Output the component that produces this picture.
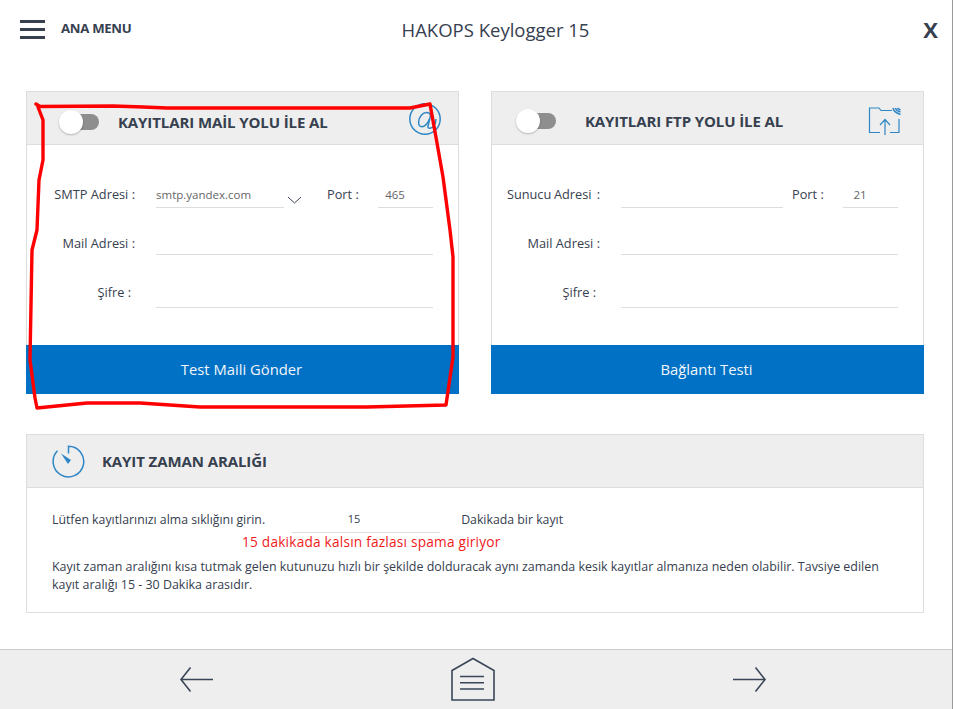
<div class="page">
  <header class="top">
    <div class="menu">
      <span class="burger"><i></i><i></i><i></i></span>
      <span class="menu-text">ANA MENU</span>
    </div>
    <div class="title">HAKOPS Keylogger 15</div>
    <div class="close">X</div>
  </header>

  <main class="content">
    <div class="cards">
      <section class="card">
        <div class="head">
          <span class="toggle"><span class="knob"></span></span>
          <h2 class="h-mail">KAYITLARI MAİL YOLU İLE AL</h2>
          <svg class="at" width="34" height="34" viewBox="0 0 34 34" fill="none" stroke="#2f86c5" stroke-width="1.5">
            <circle cx="17" cy="17" r="15.2" />
            <path d="M23.5 9.5 L20 24 Q19.6 26.5 22 26.3 Q27.5 25.5 28 17" />
            <path d="M22.6 13 C21 9.5 16.5 9.5 13.5 13 C10 17 9.5 23.5 13 24.6 C16.5 25.5 20 21 21.5 17" />
          </svg>
        </div>
        <div class="body">
          <div class="row r1">
            <label class="lbl">SMTP Adresi :</label>
            <input class="f f-smtp" value="smtp.yandex.com" />
            <svg class="chev" width="15" height="8" viewBox="0 0 15 8" fill="none" stroke="#3a4658"><path d="M1 1 L7.5 7 L14 1" /></svg>
            <label class="lbl port p-mail">Port :</label>
            <input class="f f-port" value="465" />
          </div>
          <div class="row r2">
            <label class="lbl">Mail Adresi :</label>
            <input class="f f-full" />
          </div>
          <div class="row r3">
            <label class="lbl shift">Şifre :</label>
            <input class="f f-full" />
          </div>
        </div>
        <button class="action">Test Maili Gönder</button>
      </section>

      <section class="card">
        <div class="head">
          <span class="toggle t2"><span class="knob"></span></span>
          <h2 class="h-ftp">KAYITLARI FTP YOLU İLE AL</h2>
          <svg class="ftp" width="34" height="30" viewBox="0 0 34 30" fill="none" stroke="#2f86c5" stroke-width="1.2">
            <path d="M24 3.5 H13 L11 1 H1.5 V25.5 H12 M22 25.5 H31 V12" />
            <path d="M17 28 V12.5 M12 18 L17 12.5 L22 18" />
            <path class="waves" d="M25 1 Q26 5.5 32.5 7.5 M27.3 1 Q28.5 3.8 32.5 5 M29.6 1 Q30.5 2.4 32.5 2.8" />
          </svg>
        </div>
        <div class="body">
          <div class="row r1">
            <label class="lbl tight">Sunucu Adresi&nbsp; :</label>
            <input class="f f-server" />
            <label class="lbl port p-ftp">Port :</label>
            <input class="f f-port" value="21" />
          </div>
          <div class="row r2">
            <label class="lbl">Mail Adresi :</label>
            <input class="f f-full" />
          </div>
          <div class="row r3">
            <label class="lbl shift">Şifre :</label>
            <input class="f f-full" />
          </div>
        </div>
        <button class="action">Bağlantı Testi</button>
      </section>
    </div>

    <section class="card wide">
      <div class="head">
        <svg class="timer" width="33" height="33" viewBox="0 0 33 33" fill="none" stroke="#2f86c5" stroke-width="1.5">
          <path d="M16.5 8.5 V1.2 A15.3 15.3 0 1 1 5.5 5.8" />
          <path d="M9 8.5 L19 15 L16 19 Z" fill="#2f86c5" stroke="none" />
        </svg>
        <h2>KAYIT ZAMAN ARALIĞI</h2>
      </div>
      <div class="wide-body">
        <div class="freq">
          <span class="freq-text">Lütfen kayıtlarınızı alma sıklığını girin.</span>
          <input class="f f-freq" value="15" />
          <span class="freq-text unit">Dakikada bir kayıt</span>
        </div>
        <div class="note">15 dakikada kalsın fazlası spama giriyor</div>
        <p>Kayıt zaman aralığını kısa tutmak gelen kutunuzu hızlı bir şekilde dolduracak aynı zamanda kesik kayıtlar almanıza neden olabilir. Tavsiye edilen kayıt aralığı 15 - 30 Dakika arasıdır.</p>
      </div>
    </section>
  </main>

  <footer class="bottom">
    <svg width="36" height="26" viewBox="0 0 36 26" fill="none" stroke="#3a4658" stroke-width="1.6"><path d="M34 12.5 H2 M11.5 0.5 L2 12.5 L11.5 24.5" /></svg>
    <svg width="46" height="46" viewBox="0 0 46 46" fill="none" stroke="#3a4658" stroke-width="1.6"><path d="M23 1.5 L44 13.5 V43 H2 V13.5 Z" /><path d="M10 19.5 H34 M10 25.8 H34 M10 32 H34" /></svg>
    <svg width="36" height="26" viewBox="0 0 36 26" fill="none" stroke="#3a4658" stroke-width="1.6"><path d="M2 12.5 H34 M24.5 0.5 L34 12.5 L24.5 24.5" /></svg>
  </footer>

  <svg class="scribble" width="953" height="709" viewBox="0 0 953 709" fill="none" stroke="#ff0000" stroke-width="3.4" stroke-linejoin="round" stroke-linecap="round">
    <path d="M36 104 L40 106.5 L113 106 L143 107 L167 108 L410 108 L430 104 L437 143 L443 177 L450 230 L453 257 L453 343 L453 357 L446 405 L367 407 L200 407 L140 403 L87 403 L37 408 L35 398 L30 360 L32 250 L37 230 L39 180 L43 160 L43 120 L38 107" />
  </svg>
</div>

<style>
  :global(body) { margin: 0; background: #fff; }
  .page {
    position: relative;
    width: 953px;
    height: 709px;
    box-sizing: border-box;
    border-right: 1px solid #9a9a9a;
    display: flex;
    flex-direction: column;
    overflow: hidden;
    font-family: "Open Sans", sans-serif;
    color: #36404f;
    font-size: 12px;
  }
  .top {
    height: 58px;
    flex: none;
    display: grid;
    grid-template-columns: 1fr auto 1fr;
    align-items: center;
    padding: 0 14px 0 20px;
  }
  .menu { display: flex; align-items: center; gap: 16px; }
  .burger { display: flex; flex-direction: column; gap: 5px; width: 25px; }
  .burger i { display: block; height: 3px; background: #36404f; }
  .menu-text { font-weight: 700; font-size: 13.2px; letter-spacing: -0.3px; margin-top: -2px; }
  .title { font-size: 18.5px; color: #36404f; margin-left: 33px; }
  .close { justify-self: end; font-size: 22px; font-weight: 700; margin-top: -1px; }

  .content { flex: 1; padding: 33px 28px 0 26px; }
  .cards { display: flex; justify-content: space-between; }
  .card {
    width: 433px;
    box-sizing: border-box;
    border: 1px solid #ddd;
    display: flex;
    flex-direction: column;
    height: 303px;
    background: #fff;
  }
  .head {
    height: 53px;
    flex: none;
    box-sizing: border-box;
    background: #eee;
    border-bottom: 1px solid #ddd;
    display: flex;
    align-items: center;
    position: relative;
  }
  h2 { margin: 0; font-size: 15px; font-weight: 700; color: #36404f; letter-spacing: -0.1px; }
  .h-mail { margin: 8px 0 0 19px; }
  .h-ftp { margin: 5px 0 0 29px; }
  .toggle {
    position: relative;
    width: 33px;
    height: 16px;
    margin: 7px 0 0 39px;
    border-radius: 8px;
    background: #8e8e8e;
    flex: none;
  }
  .toggle.t2 { margin: 5px 0 0 31px; }
  .knob {
    position: absolute;
    left: -7px;
    top: -4px;
    width: 24px;
    height: 24px;
    border-radius: 50%;
    background: #fff;
    box-shadow: 0 1px 2px rgba(0, 0, 0, 0.25);
  }
  .at { position: absolute; right: 16px; top: 10px; }
  .ftp { position: absolute; right: 21px; top: 15px; }
  .waves { stroke-width: 1.5; }
  .timer { margin-left: 25px; margin-right: 17px; }

  .body { flex: 1; padding-top: 39px; }
  .row { display: flex; align-items: flex-end; }
  .r2 { margin-top: 23px; }
  .r3 { margin-top: 27px; }
  .lbl {
    width: 108px;
    margin-right: 21px;
    font-size: 12.75px;
    text-align: right;
    flex: none;
    line-height: 20px;
    padding-bottom: 4px;
    box-sizing: content-box;
  }
  .tight { word-spacing: -0.7px; }
  .r2 .lbl { padding-bottom: 2px; }
  .r3 .shift { width: 104px; padding-right: 4px; padding-bottom: 6px; }
  .f {
    height: 24px;
    box-sizing: border-box;
    border: 0;
    border-bottom: 1px solid #ddd;
    background: none;
    padding: 0 0 2px;
    outline: none;
    font: 11.5px "Open Sans", sans-serif;
    color: #666;
    flex: none;
  }
  .f-smtp { width: 128px; }
  .chev { margin: 0 0 4px 3px; flex: none; }
  .port { text-align: left; margin-right: 0; }
  .p-mail { margin-left: 25px; width: 51px; }
  .p-ftp { margin-left: 9px; width: 51px; }
  .f-port { width: 55px; text-align: center; padding-right: 21px; }
  .f-full { width: 277px; }
  .f-server { width: 162px; }
  .action {
    height: 49px;
    margin: 0 -1px -1px;
    flex: none;
    border: 0;
    background: #0071c5;
    color: #f2f6fa;
    font: 14.8px "Open Sans", sans-serif;
    padding: 0 2px 2px 0;
  }

  .wide { width: 898px; height: 179px; margin-top: 40px; }
  .wide-body { padding: 18px 25px 0; }
  .freq { display: flex; align-items: flex-start; }
  .freq-text { font-size: 12.3px; line-height: 16px; margin-top: 6px; }
  .f-freq { height: 27px; width: 148px; margin-left: 27px; text-align: center; color: #36404f; font-size: 11px; padding-right: 24px; }
  .unit { margin-left: 21px; }
  .note { color: #f01a1a; font-size: 13.7px; margin: -1px 0 0 190px; line-height: 20px; letter-spacing: 0.2px; }
  p { margin: 6px 0 0; font-size: 12.45px; line-height: 18px; color: #36404f; }

  .bottom {
    height: 60px;
    flex: none;
    background: #eee;
    border-top: 1px solid #ccc;
    box-sizing: border-box;
    display: grid;
    grid-template-columns: 36px 46px 36px;
    justify-content: space-between;
    align-items: center;
    padding: 0 185px 0 179px;
  }
  .scribble { position: absolute; left: 0; top: 0; pointer-events: none; }
</style>
